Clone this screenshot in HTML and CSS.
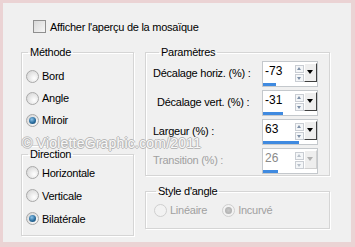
FILE: index.html
```html
<!DOCTYPE html>
<html>
<head>
    <title>Mosaïque</title>
    <meta charset="UTF-8">
    <link rel="stylesheet" href="styles.css">
</head>
<body>
    <div class="window">
        <div class="top-row">
            <span class="checkbox"></span>
            <span>Afficher l'aperçu de la mosaïque</span>
        </div>

        <div class="cols">
            <div class="col-left">
                <fieldset class="group methode">
                    <legend>Méthode</legend>
                    <div class="opt"><span class="radio"></span>Bord</div>
                    <div class="opt"><span class="radio"></span>Angle</div>
                    <div class="opt"><span class="radio on"></span>Miroir</div>
                </fieldset>
                <fieldset class="group direction">
                    <legend>Direction</legend>
                    <div class="opt"><span class="radio"></span>Horizontale</div>
                    <div class="opt"><span class="radio"></span>Verticale</div>
                    <div class="opt"><span class="radio on"></span>Bilatérale</div>
                </fieldset>
            </div>

            <div class="col-right">
                <fieldset class="group params">
                    <legend>Paramètres</legend>
                    <div class="param">
                        <span class="plabel">Décalage horiz. (%) :</span>
                        <div class="spin">
                            <div class="spin-top">
                                <span class="val">-73</span>
                                <span class="arrows"><i class="up"></i><i class="down"></i></span>
                                <span class="drop"></span>
                            </div>
                            <div class="bar"><div class="fill" style="width: 13px"></div></div>
                        </div>
                    </div>
                    <div class="param">
                        <span class="plabel indent">Décalage vert. (%) :</span>
                        <div class="spin">
                            <div class="spin-top">
                                <span class="val">-31</span>
                                <span class="arrows"><i class="up"></i><i class="down"></i></span>
                                <span class="drop"></span>
                            </div>
                            <div class="bar"><div class="fill" style="width: 20px"></div></div>
                        </div>
                    </div>
                    <div class="param">
                        <span class="plabel">Largeur (%) :</span>
                        <div class="spin">
                            <div class="spin-top">
                                <span class="val">63</span>
                                <span class="arrows"><i class="up"></i><i class="down"></i></span>
                                <span class="drop"></span>
                            </div>
                            <div class="bar"><div class="fill" style="width: 36px"></div></div>
                        </div>
                    </div>
                    <div class="param disabled">
                        <span class="plabel">Transition (%) :</span>
                        <div class="spin">
                            <div class="spin-top">
                                <span class="val">26</span>
                                <span class="arrows"><i class="up"></i><i class="down"></i></span>
                                <span class="drop"></span>
                            </div>
                            <div class="bar"><div class="fill" style="width: 15px"></div></div>
                        </div>
                    </div>
                </fieldset>

                <fieldset class="group style">
                    <legend>Style d'angle</legend>
                    <div class="style-row">
                        <div class="opt disabled"><span class="radio"></span>Linéaire</div>
                        <div class="opt disabled"><span class="radio on"></span>Incurvé</div>
                    </div>
                </fieldset>
            </div>
        </div>

        <div class="watermark">© VioletteGraphic.com/2011</div>
    </div>
</body>
</html>
```

FILE: styles.css
```css
body { margin: 0; background: #ebd3d4; font-family: "Liberation Sans", Arial, sans-serif; font-size: 11px; letter-spacing: -0.25px; color: #000; }

.window {
    position: relative;
    margin: 3px;
    width: 348px;
    height: 239px;
    background: #f0f0f0;
    padding: 17px 0 0 18px;
    box-sizing: border-box;
}

.top-row { display: flex; align-items: center; gap: 4px; margin-left: 12px; height: 13px; }
.checkbox {
    width: 11px; height: 11px;
    border: 1px solid #8f8f8f;
    background: linear-gradient(135deg, #d8d8d8, #f6f6f6);
}

.cols { display: flex; gap: 11px; margin-top: 13px; }
.col-left { width: 113px; display: flex; flex-direction: column; }
.col-right { width: 185px; display: flex; flex-direction: column; }

.group {
    margin: 0;
    padding: 0;
    border: 1px solid #d5d5d5;
    box-shadow: inset 1px 1px 0 #fff, 1px 1px 0 #fff;
    box-sizing: border-box;
}
.group legend { margin-left: 6px; padding: 0 2px; line-height: 12px; }

.methode { height: 100px; padding-top: 7px; }
.direction { height: 88px; margin-top: 2px; padding-top: 1px; }

.opt { display: flex; align-items: center; gap: 3px; height: 22px; padding-left: 4px; }
.direction .opt { height: 23px; }

.radio {
    position: relative;
    width: 11px; height: 11px;
    border-radius: 50%;
    border: 1px solid #a9a9a9;
    background: radial-gradient(circle at 65% 65%, #ffffff, #d9d9d9 80%);
}
.radio.on::after {
    content: "";
    position: absolute;
    left: 2px; top: 2px;
    width: 7px; height: 7px;
    border-radius: 50%;
    background: radial-gradient(circle at 40% 35%, #8ec4ea, #2a6d9e 55%, #123f63);
}

.params { height: 130px; padding: 3px 0 0 7px; }
.param { display: flex; height: 29px; }
.plabel { width: 109px; height: 22px; line-height: 24px; }
.plabel.indent { padding-left: 4px; width: 105px; }

.spin { width: 56px; height: 26px; border: 1px solid #c4c8cc; box-sizing: border-box; background: #fff; display: flex; flex-direction: column; }
.spin-top { display: flex; height: 21px; }
.val { flex: 1; padding: 2px 0 0 2px; font-size: 12px; letter-spacing: 0; }
.arrows { width: 9px; display: flex; flex-direction: column; justify-content: center; gap: 1px; padding-top: 1px; }
.arrows i { display: block; width: 7px; height: 6px; border: 1px solid #c9cdd3; position: relative; background: #f4f6f8; }
.arrows i::after { content: ""; position: absolute; left: 1px; border-left: 2.5px solid transparent; border-right: 2.5px solid transparent; }
.arrows .up::after { top: 1px; border-bottom: 3px solid #7d8fa6; }
.arrows .down::after { top: 2px; border-top: 3px solid #7d8fa6; }
.drop {
    width: 11px; height: 17px; margin-top: 1px;
    background: #eeeeee;
    border: 1px solid #fff;
    border-right-color: #404040; border-bottom-color: #404040;
    position: relative;
}
.drop::after { content: ""; position: absolute; left: 2px; top: 6px; border-left: 3.5px solid transparent; border-right: 3.5px solid transparent; border-top: 4px solid #000; }

.bar { height: 3px; margin-top: 0; background: #fff; }
.fill { height: 3px; background: #3f8ae0; }

.disabled { color: #a0a0a0; }
.disabled .val { color: #8a8a8a; }
.disabled .arrows .up::after { border-bottom-color: #b8c0ca; }
.disabled .arrows .down::after { border-top-color: #b8c0ca; }
.disabled .drop { border-color: #fff; border-right-color: #d0d0d0; border-bottom-color: #d0d0d0; }
.disabled .drop::after { border-top-color: #b0b0b0; }
.disabled .radio { border-color: #cfcfcf; background: #f2f2f2; }
.disabled .radio.on::after { background: radial-gradient(circle, #c8c8c8, #a8a8a8); }

.style { height: 44px; margin-top: 9px; padding: 2px 0 0 4px; }
.style-row { display: flex; gap: 11px; }

.watermark {
    position: absolute;
    left: 19px; top: 132px;
    font-size: 14px;
    letter-spacing: 0.2px;
    color: #f8f8f8;
    text-shadow: 1px 0 0 #b8b8b8, -1px 0 0 #b8b8b8, 0 1px 0 #b8b8b8, 0 -1px 0 #b8b8b8;
}
```
